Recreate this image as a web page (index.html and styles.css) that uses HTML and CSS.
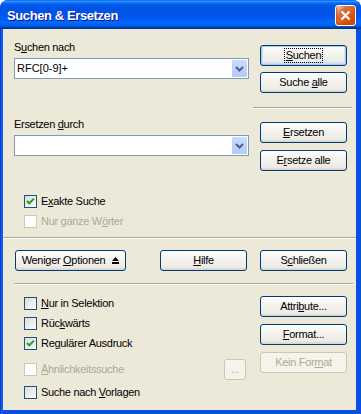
FILE: index.html
```html
<!DOCTYPE html>
<html lang="de">
<head>
    <meta charset="UTF-8">
    <meta name="viewport" content="width=device-width, initial-scale=1.0">
    <title>Suchen &amp; Ersetzen</title>
    <link rel="stylesheet" href="styles.css">
</head>
<body>
    <div class="window">
        <div class="titlebar">
            <span class="title">Suchen &amp; Ersetzen</span>
            <span class="close">
                <svg width="11" height="11" viewBox="0 0 11 11"><path d="M1.5 1.5 L9.5 9.5 M9.5 1.5 L1.5 9.5" stroke="#fff" stroke-width="2.2" fill="none"/></svg>
            </span>
        </div>
        <div class="frame">
            <div class="client">
                <div class="search-area">
                    <div class="fields">
                        <div class="label label-first">S<u>u</u>chen nach</div>
                        <div class="combo">
                            <span class="combo-text">RFC[0-9]+</span>
                            <span class="combo-btn"><svg width="15" height="17" viewBox="0 0 15 17"><path d="M4 7 L7.5 10.5 L11 7" stroke="#4d6185" stroke-width="2" fill="none"/></svg></span>
                        </div>
                        <div class="label label-second">Ersetzen <u>d</u>urch</div>
                        <div class="combo">
                            <span class="combo-text"></span>
                            <span class="combo-btn"><svg width="15" height="17" viewBox="0 0 15 17"><path d="M4 7 L7.5 10.5 L11 7" stroke="#4d6185" stroke-width="2" fill="none"/></svg></span>
                        </div>
                    </div>
                    <div class="actions">
                        <button class="btn btn-default"><span class="focus"><u>S</u>uchen</span></button>
                        <button class="btn"><span>Suche <u>a</u>lle</span></button>
                        <div class="rule"></div>
                        <button class="btn btn-replace"><span><u>E</u>rsetzen</span></button>
                        <button class="btn"><span>E<u>r</u>setze alle</span></button>
                    </div>
                </div>

                <div class="match-opts">
                    <div class="check-row"><span class="box checked"></span><span>E<u>x</u>akte Suche</span></div>
                    <div class="check-row disabled"><span class="box"></span><span>Nur ganze W<u>ö</u>rter</span></div>
                </div>

                <div class="sep sep-full"></div>

                <div class="btn-row">
                    <button class="btn btn-more"><span>Weniger <u>O</u>ptionen</span>
                        <svg width="7" height="7" viewBox="0 0 7 7"><path d="M0 4 L3.5 0 L7 4 Z" fill="#000"/><rect x="0" y="5" width="7" height="2" fill="#000"/></svg>
                    </button>
                    <button class="btn"><span><u>H</u>ilfe</span></button>
                    <button class="btn"><span>S<u>c</u>hließen</span></button>
                </div>

                <div class="sep sep-inset"></div>

                <div class="more-area">
                    <div class="opt-list">
                        <div class="check-row"><span class="box"></span><span><u>N</u>ur in Selektion</span></div>
                        <div class="check-row"><span class="box"></span><span>Rüc<u>k</u>wärts</span></div>
                        <div class="check-row"><span class="box checked"></span><span>Re<u>g</u>ulärer Ausdruck</span></div>
                        <div class="check-row check-row-wide">
                            <span class="check-part disabled"><span class="box"></span><span><u>Ä</u>hnlichkeitssuche</span></span>
                            <button class="btn btn-small" disabled><span>...</span></button>
                        </div>
                        <div class="check-row check-row-last"><span class="box"></span><span>Suche nach <u>V</u>orlagen</span></div>
                    </div>
                    <div class="actions actions-more">
                        <button class="btn"><span>Attri<u>b</u>ute...</span></button>
                        <button class="btn"><span><u>F</u>ormat...</span></button>
                        <button class="btn" disabled><span>Kein For<u>m</u>at</span></button>
                    </div>
                </div>
            </div>
        </div>
    </div>
</body>
</html>
```

FILE: styles.css
```css
body {
    margin: 0;
    background: #fff;
    font-family: "Liberation Sans", Arial, sans-serif;
    font-size: 11px;
    line-height: 13px;
    letter-spacing: -0.3px;
    color: #000;
}
u {
    text-decoration: underline;
    text-underline-offset: 1px;
}

/* window frame */
.window {
    width: 361px;
    height: 414px;
    display: flex;
    flex-direction: column;
    border-radius: 8px 8px 0 0;
    overflow: hidden;
    background: #0b4fe0;
}
.titlebar {
    height: 29px;
    flex: none;
    display: flex;
    align-items: center;
    padding: 0 5px 0 7px;
    background: linear-gradient(to bottom, #0058ee 0%, #3593ff 4%, #288eff 6%, #127dff 8%, #036ffc 10%, #0262ee 14%, #0057e5 20%, #0054e3 24%, #0055eb 56%, #005bf5 66%, #026afe 76%, #0062ef 86%, #0052d6 92%, #0040ab 94%, #003092 100%);
}
.title {
    flex: 1;
    padding-top: 1px;
    color: #fff;
    font-weight: bold;
    font-size: 13px;
    line-height: 15px;
    letter-spacing: -0.4px;
    text-shadow: 1px 1px #0f1089;
}
.close {
    width: 19px;
    height: 19px;
    margin-top: 1px;
    display: flex;
    align-items: center;
    justify-content: center;
    border: 1px solid #fff;
    border-radius: 3px;
    background: radial-gradient(circle at 90% 90%, #cc4600 0, #dc6527 55%, #cd7546 70%, #ffccb2 90%, #fff 100%);
    box-shadow: inset 0 -1px 2px 1px #da4600;
}
.frame {
    flex: 1;
    display: flex;
    padding: 0 5px 4px 3px;
    background: linear-gradient(to right, #0831d9, #166aee 2px, #0b4fe0 3px);
}
.client {
    flex: 1;
    display: flex;
    flex-direction: column;
    background: #ece9d8;
}

/* top area */
.search-area {
    display: grid;
    grid-template-columns: 235px 87px;
    column-gap: 11px;
    padding: 0 9px 0 11px;
}
.fields {
    display: flex;
    flex-direction: column;
}
.label-first {
    margin-top: 12px;
    margin-bottom: 4px;
}
.label-second {
    margin-top: 39px;
    margin-bottom: 4px;
}
.combo {
    height: 19px;
    display: flex;
    align-items: center;
    border: 1px solid #7f9db9;
    background: #fff;
}
.combo-text {
    flex: 1;
    padding-left: 2px;
    letter-spacing: 0;
}
.combo-btn {
    width: 15px;
    height: 17px;
    margin-right: 1px;
    display: flex;
    background: linear-gradient(#cadcfd, #b3c9f7);
    border-radius: 1px;
}

.actions {
    display: flex;
    flex-direction: column;
    padding-top: 16px;
}
.rule {
    height: 1px;
    margin: 14px -5px 13px -7px;
    background: #aca899;
    border-bottom: 1px solid #fff;
}
.actions .btn + .btn {
    margin-top: 6px;
}
.actions .btn-replace + .btn {
    margin-top: 7px;
}

/* buttons */
.btn {
    height: 21px;
    width: 87px;
    padding: 0;
    display: flex;
    align-items: center;
    justify-content: center;
    font: inherit;
    letter-spacing: inherit;
    color: #000;
    border: 1px solid #003c74;
    border-radius: 3px;
    background: linear-gradient(#fff 0%, #f4f3ee 40%, #ecebe6 85%, #d6d0c5 100%);
}
.btn-default {
    box-shadow: inset 0 0 0 1px #aac6f1, inset 0 -1px 0 2px #cfe0fa;
}
.focus {
    border: 1px dotted #000;
    padding: 0 1px;
}
.btn:disabled {
    color: #aca899;
    border-color: #c9c7ba;
    background: #f5f4ea;
}

/* checkboxes */
.match-opts {
    display: flex;
    flex-direction: column;
    gap: 7px;
    padding: 24px 0 0 21px;
}
.check-row {
    height: 13px;
    display: flex;
    align-items: flex-start;
    gap: 4px;
}
.check-part {
    display: flex;
    align-items: center;
    gap: 4px;
}
.box {
    width: 11px;
    height: 11px;
    flex: none;
    border: 1px solid #1c5180;
    background: linear-gradient(135deg, #dcdcd7, #fbfbf9);
}
.box.checked {
    background: url("data:image/svg+xml,%3Csvg xmlns='http://www.w3.org/2000/svg' width='11' height='11'%3E%3Cpath d='M2 5 L4.3 7.3 L9 2.6' stroke='%2321a121' stroke-width='2' fill='none'/%3E%3C/svg%3E"), linear-gradient(135deg, #dcdcd7, #fbfbf9);
}
.disabled {
    color: #aca899;
}
.disabled .box {
    border-color: #cac8bb;
    background: #fff;
}

.sep {
    height: 1px;
    background: #aca899;
    border-bottom: 1px solid #fff;
}
.sep-full {
    margin-top: 9px;
}
.sep-inset {
    margin: 12px 3px 0 11px;
}

.btn-row {
    display: flex;
    gap: 13px;
    padding: 11px 9px 0 12px;
}
.btn-more {
    width: 111px;
    margin-right: auto;
    gap: 7px;
}

/* options */
.more-area {
    display: grid;
    grid-template-columns: 1fr 87px;
    column-gap: 14px;
    padding: 0 9px 0 21px;
}
.opt-list {
    display: flex;
    flex-direction: column;
    gap: 7px;
    padding-top: 12px;
}
.check-row-wide {
    height: 21px;
    margin-top: 2px;
    align-items: center;
}
.check-row-last {
    margin-top: -1px;
}
.btn-small {
    width: 22px;
    margin-left: auto;
}
.actions-more {
    padding-top: 11px;
}
.actions-more .btn + .btn {
    margin-top: 7px;
}
```
